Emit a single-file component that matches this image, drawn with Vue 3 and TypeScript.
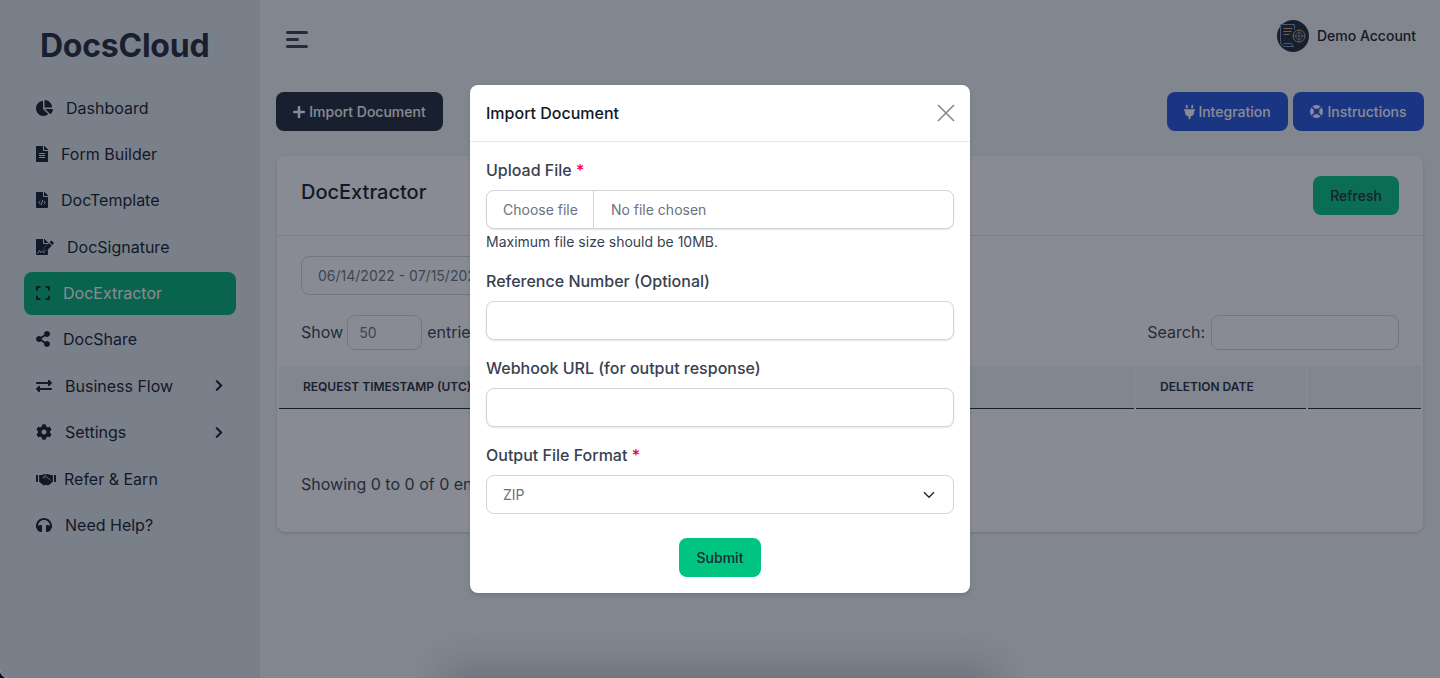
<template>
  <div class="app">
    <aside class="sidebar">
      <div class="logo">DocsCloud</div>
      <nav class="menu">
        <a
          v-for="item in menu"
          :key="item.label"
          class="menu-item"
          :class="{ active: item.active, tight: item.tight }"
        >
          <svg class="menu-icon" :viewBox="item.box" :width="item.width" height="16" fill="currentColor">
            <path :d="item.path" />
            <path
              v-if="item.cut"
              :d="item.cut"
              fill="none"
              stroke="#e3e8ed"
              :stroke-width="item.cutWidth"
              stroke-linecap="round"
              stroke-linejoin="round"
            />
            <path v-if="item.over" :d="item.over" stroke="#e3e8ed" stroke-width="22" paint-order="stroke" />
          </svg>
          <span class="menu-label">{{ item.label }}</span>
          <svg v-if="item.more" class="menu-chevron" viewBox="0 0 320 512" width="8" height="13" fill="currentColor">
            <path :d="chevronRight" />
          </svg>
        </a>
      </nav>
    </aside>

    <main class="main">
      <header class="topbar">
        <button class="burger" aria-label="Menu"><i></i><i class="short"></i><i></i></button>
        <div class="account">
          <svg class="avatar" viewBox="0 0 32 32" width="32" height="32" fill="none">
            <circle cx="16" cy="16" r="16" fill="#1b2638" />
            <path d="M3.500 4.500h14v5M3.500 4.500v17c0 3 2 5 5 5h8l-2-3h-8" stroke="#8496b4" stroke-width="1" />
            <path d="M6.500 8.500h9M6.500 11.500h8M6.500 14.500h6" stroke="#e0a25c" stroke-width="1" />
            <circle cx="22" cy="16" r="6" stroke="#e0a25c" stroke-width="1" />
            <circle cx="22" cy="16" r="3.500" stroke="#8496b4" stroke-width="0.800" />
            <path d="M22 10v12M16 16h12" stroke="#b8a078" stroke-width="0.800" />
          </svg>
          <span class="account-name">Demo Account</span>
        </div>
      </header>

      <div class="actions">
        <button class="btn btn-dark">
          <svg viewBox="0 0 448 512" width="12" height="14" fill="currentColor" preserveAspectRatio="none">
            <path d="M416 208H272V64c0-17.670-14.330-32-32-32h-32c-17.670 0-32 14.330-32 32v144H32c-17.670 0-32 14.330-32 32v32c0 17.670 14.330 32 32 32h144v144c0 17.670 14.330 32 32 32h32c17.670 0 32-14.330 32-32V304h144c17.670 0 32-14.330 32-32v-32c0-17.670-14.330-32-32-32z" />
          </svg>
          Import Document
        </button>
        <div class="actions-right">
          <button class="btn btn-blue btn-integration">
            <svg class="plug" viewBox="0 0 384 512" width="11" height="16" fill="currentColor">
              <path d="M320 32a32 32 0 0 0-64 0v96h64Zm48 128H16A16 16 0 0 0 0 176v32a16 16 0 0 0 16 16H32v32A160.070 160.070 0 0 0 160 412.800V512h64V412.800A160.070 160.070 0 0 0 352 256V224h16a16 16 0 0 0 16-16V176A16 16 0 0 0 368 160ZM128 32a32 32 0 0 0-64 0v96h64Z" />
            </svg>
            Integration
          </button>
          <button class="btn btn-blue btn-instructions">
            <svg viewBox="0 0 13 13" width="13" height="13" fill="none">
              <circle cx="6.500" cy="6.500" r="4.700" stroke="currentColor" stroke-width="3.600" />
              <path d="M2 2l2.600 2.600M11 2L8.400 4.600M2 11l2.600-2.600M11 11L8.400 8.400" stroke="#2352dd" stroke-width="1.500" />
            </svg>
            Instructions
          </button>
        </div>
      </div>

      <section class="card">
        <div class="card-head">
          <h2>DocExtractor</h2>
          <button class="btn btn-green">Refresh</button>
        </div>
        <div class="card-body">
          <input class="field date" type="text" value="06/14/2022 - 07/15/2022" readonly />
          <div class="table-tools">
            <label class="tool"><span>Show</span> <input class="field entries" type="text" value="50" readonly /> <span>entries</span></label>
            <label class="tool"><span>Search:</span> <input class="field search" type="text" readonly /></label>
          </div>
        </div>
        <div class="thead">
          <div class="th">Request Timestamp (UTC)</div>
          <div class="th">Deletion Date</div>
          <div class="th"></div>
        </div>
        <div class="table-info">Showing 0 to 0 of 0 entries</div>
      </section>
    </main>

    <div class="backdrop">
      <div class="bottom-shadow"></div>
      <div class="modal">
        <div class="modal-head">
          <h3>Import Document</h3>
          <svg class="close" viewBox="0 0 18 18" width="18" height="18" fill="none" stroke="#858a93" stroke-width="1.700">
            <path d="M1 1l16 16M17 1L1 17" />
          </svg>
        </div>
        <form class="modal-body" @submit.prevent>
          <div class="group">
            <label class="label">Upload File <em>*</em></label>
            <div class="control file">
              <span class="file-btn">Choose file</span>
              <span class="file-name">No file chosen</span>
            </div>
            <p class="hint">Maximum file size should be 10MB.</p>
          </div>
          <div class="group">
            <label class="label">Reference Number (Optional)</label>
            <input class="control" type="text" />
          </div>
          <div class="group">
            <label class="label">Webhook URL (for output response)</label>
            <input class="control" type="text" />
          </div>
          <div class="group">
            <label class="label">Output File Format <em>*</em></label>
            <div class="control select">
              <span>ZIP</span>
              <svg viewBox="0 0 12 8" width="12" height="8" fill="none" stroke="#1f2937" stroke-width="1.500">
                <path d="M1 1.200l5 5 5-5" />
              </svg>
            </div>
          </div>
          <div class="submit-row">
            <button class="btn btn-submit" type="submit">Submit</button>
          </div>
        </form>
      </div>
    </div>
  </div>
</template>

<script setup lang="ts">
interface MenuItem {
  label: string
  box: string
  width: number
  path: string
  cut?: string
  cutWidth?: number
  over?: string
  active?: boolean
  more?: boolean
  tight?: boolean
}

const fileBase =
  'M224 136V0H24C10.700 0 0 10.700 0 24v464c0 13.300 10.700 24 24 24h336c13.300 0 24-10.700 24-24V160H248c-13.200 0-24-10.800-24-24zM384 121.900v6.100H256V0h6.100c6.400 0 12.500 2.500 17 7l97.900 98c4.500 4.500 7 10.600 7 16.900z'

const chevronRight =
  'M285.476 272.971L91.132 467.314c-9.373 9.373-24.569 9.373-33.941 0l-22.667-22.667c-9.357-9.357-9.375-24.522-.04-33.901L188.505 256 34.484 101.255c-9.335-9.379-9.317-24.544.04-33.901l22.667-22.667c9.373-9.373 24.569-9.373 33.941 0L285.475 239.030c9.373 9.372 9.373 24.568.001 33.941z'

const menu: MenuItem[] = [
  {
    label: 'Dashboard',
    box: '0 0 544 512',
    width: 17,
    path: 'M527.790 288H290.500l158.030 158.030c6.040 6.040 15.980 6.530 22.190.68 38.700-36.460 65.320-85.610 73.130-140.860 1.340-9.460-6.510-17.850-16.060-17.850zm-15.830-64.800C503.720 103.740 408.260 8.280 288.800.04 279.680-.59 272 7.100 272 16.240V240h223.770c9.140 0 16.820-7.680 16.190-16.800zM224 288V50.710c0-9.550-8.390-17.400-17.840-16.060C86.990 51.490-4.100 155.600.14 280.370 4.500 408.510 114.830 513.590 243.030 511.980c50.400-.63 96.970-16.870 135.260-44.030 7.900-5.600 8.420-17.230 1.570-24.080L224 288z',
  },
  {
    label: 'Form Builder',
    box: '0 0 384 512',
    width: 12,
    path: 'M224 136V0H24C10.700 0 0 10.700 0 24v464c0 13.300 10.700 24 24 24h336c13.300 0 24-10.700 24-24V160H248c-13.200 0-24-10.800-24-24zm64 236c0 6.600-5.400 12-12 12H108c-6.600 0-12-5.400-12-12v-8c0-6.600 5.400-12 12-12h168c6.600 0 12 5.400 12 12v8zm0-64c0 6.600-5.400 12-12 12H108c-6.600 0-12-5.400-12-12v-8c0-6.600 5.400-12 12-12h168c6.600 0 12 5.400 12 12v8zm0-72v8c0 6.600-5.400 12-12 12H108c-6.600 0-12-5.400-12-12v-8c0-6.600 5.400-12 12-12h168c6.600 0 12 5.400 12 12zm96-114.100v6.100H256V0h6.100c6.400 0 12.500 2.500 17 7l97.900 98c4.500 4.500 7 10.600 7 16.900z',
  },
  {
    label: 'DocTemplate',
    box: '0 0 384 512',
    width: 12,
    path: fileBase,
    cut: 'M130 290l-46 46 46 46M254 290l46 46-46 46M212 270l-40 132',
    cutWidth: 32,
  },
  {
    label: 'DocSignature',
    box: '0 0 576 512',
    width: 18,
    path: fileBase,
    cut: 'M56 450c30-60 50-80 66-76 20 6 0 56 24 56 20 0 30-44 50-40 16 4 10 30 30 30h50',
    cutWidth: 30,
    over: 'M560 108l-44-44c-12-12-30-12-42 0l-40 40 86 86 40-40c12-12 12-30 0-42zM414 124L270 268l-14 104 104-14 144-144z',
  },
  {
    label: 'DocExtractor',
    box: '0 0 448 448',
    width: 14,
    active: true,
    path: 'M0 140V24C0 10.700 10.700 0 24 0h116v64H64v76zM308 0h116c13.300 0 24 10.700 24 24v116h-64V64h-76zM448 308v116c0 13.300-10.700 24-24 24H308v-64h76v-76zM140 448H24c-13.300 0-24-10.700-24-24V308h64v76h76z',
  },
  {
    label: 'DocShare',
    box: '0 0 448 512',
    width: 14,
    path: 'M352 320c-22.608 0-43.387 7.819-59.790 20.895l-102.486-64.054a96.551 96.551 0 0 0 0-41.683l102.486-64.054C308.613 184.181 329.392 192 352 192c53.019 0 96-42.981 96-96S405.019 0 352 0s-96 42.981-96 96c0 7.158.79 14.130 2.276 20.841L155.790 180.895C139.387 167.819 118.608 160 96 160c-53.019 0-96 42.981-96 96s42.981 96 96 96c22.608 0 43.387-7.819 59.790-20.895l102.486 64.054A96.301 96.301 0 0 0 256 416c0 53.019 42.981 96 96 96s96-42.981 96-96-42.981-96-96-96z',
  },
  {
    label: 'Business Flow',
    box: '0 0 512 512',
    width: 16,
    more: true,
    path: 'M0 168v-16c0-13.255 10.745-24 24-24h360V80c0-21.367 25.899-32.042 40.971-16.971l80 80c9.372 9.373 9.372 24.569 0 33.941l-80 80C409.956 271.982 384 261.456 384 240v-48H24c-13.255 0-24-10.745-24-24zm488 152H128v-48c0-21.314-25.862-32.080-40.971-16.971l-80 80c-9.372 9.373-9.372 24.569 0 33.941l80 80C102.057 463.997 128 453.437 128 432v-48h360c13.255 0 24-10.745 24-24v-16c0-13.255-10.745-24-24-24z',
  },
  {
    label: 'Settings',
    box: '0 0 512 512',
    width: 16,
    more: true,
    path: 'M487.400 315.700l-42.600-24.600c4.300-23.200 4.300-47 0-70.200l42.600-24.600c4.900-2.800 7.100-8.600 5.500-14-11.100-35.600-30-67.800-54.700-94.600-3.800-4.100-10-5.100-14.800-2.300L380.800 110c-17.900-15.400-38.500-27.300-60.800-35.100V25.800c0-5.600-3.900-10.500-9.400-11.700-36.700-8.200-74.300-7.800-109.200 0-5.500 1.200-9.400 6.100-9.400 11.700V75c-22.200 7.900-42.800 19.800-60.800 35.100L88.700 85.500c-4.900-2.800-11-1.900-14.800 2.300-24.700 26.700-43.600 58.900-54.700 94.600-1.700 5.400.6 11.200 5.500 14L67.300 221c-4.300 23.200-4.300 47 0 70.200l-42.600 24.600c-4.900 2.800-7.100 8.600-5.500 14 11.100 35.600 30 67.800 54.700 94.600 3.800 4.100 10 5.100 14.800 2.300l42.600-24.600c17.900 15.400 38.500 27.300 60.800 35.100v49.200c0 5.600 3.900 10.500 9.400 11.700 36.700 8.200 74.300 7.800 109.200 0 5.500-1.200 9.400-6.100 9.400-11.700v-49.200c22.200-7.900 42.800-19.800 60.800-35.100l42.600 24.600c4.900 2.800 11 1.900 14.800-2.300 24.700-26.700 43.600-58.900 54.700-94.600 1.500-5.500-.7-11.300-5.600-14.100zM256 336c-44.100 0-80-35.900-80-80s35.900-80 80-80 80 35.900 80 80-35.900 80-80 80z',
  },
  {
    label: 'Refer & Earn',
    box: '0 0 640 512',
    width: 20,
    tight: true,
    path: 'M0 128h48c9 0 16 7 16 16v190c0 9-7 16-16 16H0zM592 128h48v222h-48c-9 0-16-7-16-16V144c0-9 7-16 16-16zM100 130h96l60-34h128l60 34h96v210l-128 104c-24 20-58 20-80 2l-18-14-20 18c-22 20-58 14-74-10L100 340z',
    cut: 'M330 104l-90 84c-18 22 10 46 32 30l52-42 124 108',
    cutWidth: 26,
  },
  {
    label: 'Need Help?',
    box: '0 0 512 512',
    width: 16,
    path: 'M256 32C114.520 32 0 146.496 0 288v48a32 32 0 0 0 17.689 28.622l14.383 7.191C34.083 431.903 83.421 480 144 480h24c13.255 0 24-10.745 24-24V280c0-13.255-10.745-24-24-24h-24c-31.342 0-59.671 12.879-80 33.627V288c0-105.869 86.131-192 192-192s192 86.131 192 192v1.627C427.671 268.879 399.342 256 368 256h-24c-13.255 0-24 10.745-24 24v176c0 13.255 10.745 24 24 24h24c60.579 0 109.917-48.098 111.928-108.187l14.382-7.191A32 32 0 0 0 512 336v-48c0-141.479-114.496-256-256-256z',
  },
]
</script>

<style>
html,
body {
  margin: 0;
  background: #120a26;
}
</style>

<style scoped>
* {
  box-sizing: border-box;
}

.app {
  position: relative;
  display: flex;
  height: 678px;
  overflow: hidden;
  border-bottom-left-radius: 8px;
  background: #f3f4f6;
  font-family: Inter, 'Liberation Sans', sans-serif;
  color: #1f2937;
}

.sidebar {
  flex: 0 0 260px;
  padding: 0 24px;
  background: #e3e8ed;
}

.logo {
  padding: 26px 0 0 16px;
  height: 86px;
  font-size: 32px;
  line-height: 40px;
  font-weight: 700;
  letter-spacing: -0.25px;
  color: #1f2937;
}

.menu {
  display: flex;
  flex-direction: column;
  gap: 3.400px;
}

.menu-item {
  display: flex;
  align-items: center;
  height: 43px;
  padding: 0 12px;
  border-radius: 8px;
  font-size: 16px;
  color: #111827;
}

.menu-item.active {
  background: #00b074;
  color: #111827;
}

.menu-item.active .menu-label {
  color: #fff;
}

.menu-icon {
  flex: none;
  margin-right: 13px;
}

.menu-item.tight .menu-icon {
  margin-right: 8px;
}

.menu-chevron {
  margin-left: auto;
  margin-right: 1px;
}

.main {
  flex: 1;
  min-width: 0;
  padding: 0 16px;
}

.topbar {
  display: flex;
  align-items: center;
  justify-content: space-between;
  height: 72px;
  padding: 0 8px 0 10px;
}

.burger {
  display: flex;
  flex-direction: column;
  gap: 4px;
  margin: 6px 0 0;
  padding: 0;
  border: 0;
  background: none;
}

.burger i {
  display: block;
  width: 22px;
  height: 3px;
  border-radius: 2px;
  background: #374151;
}

.burger i.short {
  width: 13px;
}

.account {
  display: flex;
  align-items: center;
  gap: 8px;
  font-size: 14px;
  font-weight: 500;
  color: #111827;
}

.account-name {
  margin-top: -1px;
}

.actions {
  display: flex;
  justify-content: space-between;
  margin-top: 20px;
}

.actions-right {
  display: flex;
  gap: 5px;
}

.btn {
  display: inline-flex;
  align-items: center;
  justify-content: center;
  gap: 4px;
  height: 39px;
  padding: 0;
  border: 0;
  border-radius: 8px;
  font-family: inherit;
  font-size: 14px;
  font-weight: 500;
  color: #fff;
}

.plug {
  margin-right: -1px;
}

.btn-dark {
  width: 167px;
  background: #1f2937;
}

.btn-blue {
  background: #2352dd;
}

.btn-integration {
  width: 121px;
}

.btn-instructions {
  width: 131px;
}

.btn-green {
  width: 86px;
  background: #00c480;
  color: #1f2937;
}

.btn-submit {
  width: 82px;
  background: #00c480;
  color: #1f2937;
}

.card {
  margin: 25px 0 0 1px;
  height: 376px;
  width: 1146px;
  border-radius: 8px;
  background: #fff;
  box-shadow: 0 1px 3px rgba(0, 0, 0, 0.16);
}

.card-head {
  display: flex;
  align-items: center;
  justify-content: space-between;
  height: 80px;
  padding: 0 24px;
  border-bottom: 1px solid #e5e7eb;
}

.card-head h2 {
  margin: 0 0 7px;
  font-size: 20px;
  font-weight: 500;
  color: #111827;
}

.card-body {
  padding: 20px 24px 0;
}

.field {
  display: block;
  height: 35px;
  padding: 0 11px;
  border: 1px solid #d1d5db;
  border-radius: 8px;
  background: #fff;
  font-family: inherit;
  font-size: 14px;
  color: #6b7280;
  outline: none;
}

.date {
  width: 240px;
  height: 39px;
  padding: 0 16px;
}

.table-tools {
  display: flex;
  justify-content: space-between;
  margin-top: 20px;
}

.tool {
  display: flex;
  align-items: center;
  gap: 4px;
  font-size: 16px;
  color: #374151;
}

.tool span {
  margin-top: -2px;
}

.entries {
  width: 75px;
  margin-right: 1px;
}

.search {
  width: 188px;
  margin-left: 2px;
}

.thead {
  display: grid;
  grid-template-columns: 855px 170px 113px;
  gap: 2px;
  margin: 16px 2px 0;
}

.th {
  height: 43px;
  padding: 0 24px;
  border-bottom: 1px solid #1f2937;
  background: #f3f4f6;
  font-size: 12px;
  line-height: 42px;
  font-weight: 600;
  text-transform: uppercase;
  color: #1f2937;
}

.table-info {
  margin-top: 65px;
  padding-left: 24px;
  font-size: 16px;
  color: #374151;
}

.backdrop {
  position: absolute;
  inset: 0;
  display: flex;
  justify-content: center;
  align-items: flex-start;
  padding-top: 85px;
  background: rgba(17, 24, 39, 0.5);
}

.bottom-shadow {
  position: absolute;
  left: 455px;
  bottom: -18px;
  width: 530px;
  height: 18px;
  box-shadow: 0 0 36px 8px rgba(17, 24, 39, 0.24);
}

.modal {
  position: relative;
  width: 500px;
  border-radius: 8px;
  background: #fff;
  box-shadow: 0 2px 4px rgba(0, 0, 0, 0.12);
}

.modal-head {
  display: flex;
  align-items: center;
  justify-content: space-between;
  height: 57px;
  padding: 0 15px 0 16px;
  border-bottom: 1px solid #e5e7eb;
}

.modal-head h3 {
  margin: 0;
  font-size: 16px;
  font-weight: 500;
  color: #111827;
}

.modal-body {
  display: flex;
  flex-direction: column;
  gap: 16px;
  padding: 16px;
}

.group {
  display: flex;
  flex-direction: column;
}

.label {
  margin-bottom: 8px;
  font-size: 16px;
  line-height: 24px;
  font-weight: 500;
  color: #374151;
}

.label em {
  font-style: normal;
  color: #f4003f;
}

.control {
  display: flex;
  align-items: center;
  width: 468px;
  height: 39px;
  padding: 0;
  border: 1px solid #d1d5db;
  border-radius: 8px;
  background: #fff;
  box-shadow: 0 1px 2px rgba(0, 0, 0, 0.1);
  font-family: inherit;
  font-size: 14px;
  color: #6b7280;
  outline: none;
}

.file-btn {
  display: flex;
  align-items: center;
  height: 100%;
  padding: 0 15px 0 16px;
  border-right: 1px solid #d1d5db;
}

.file-name {
  padding-left: 17px;
}

.hint {
  margin: 3px 0 1px;
  font-size: 14px;
  line-height: 20px;
  color: #374151;
}

.select {
  justify-content: space-between;
  padding: 0 18px 0 16px;
  box-shadow: none;
}

.submit-row {
  display: flex;
  justify-content: center;
  margin-top: 8px;
}
</style>
